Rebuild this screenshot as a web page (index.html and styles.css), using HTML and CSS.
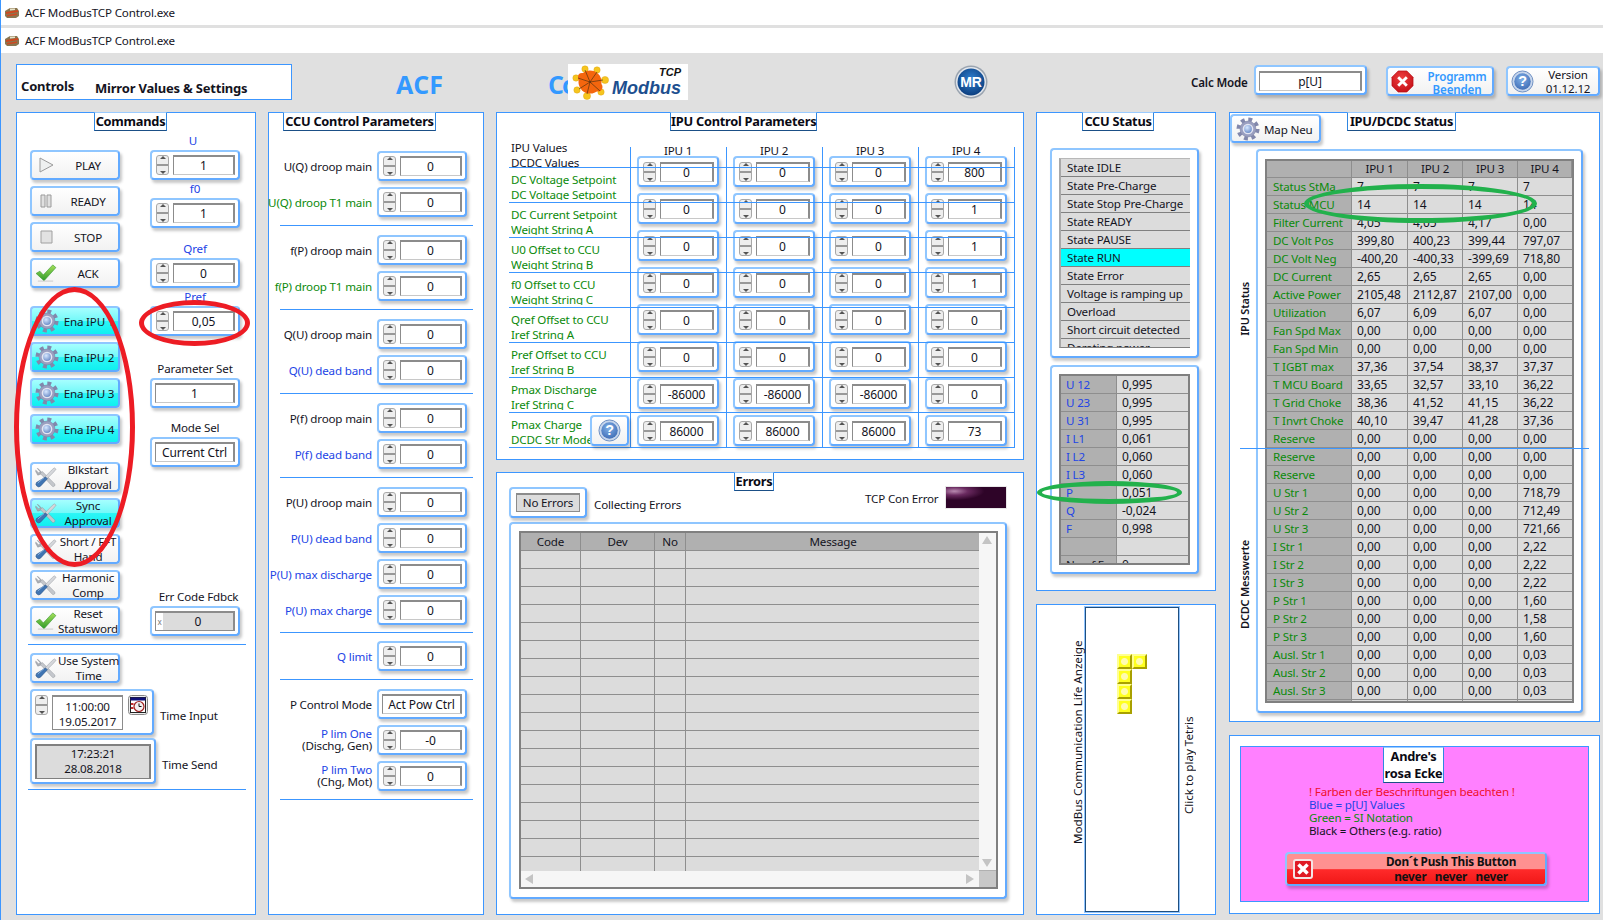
FILE: index.html
```html
<!DOCTYPE html>
<html lang="de">
<head>
<meta charset="utf-8">
<title>ACF ModBusTCP Control.exe</title>
<link rel="stylesheet" href="styles.css">
</head>
<body>
<svg class="defs" width="0" height="0" aria-hidden="true">
  <defs>
    <radialGradient id="gCore" cx=".4" cy=".35" r=".7"><stop offset="0" stop-color="#d8e8ff"/><stop offset="1" stop-color="#5b7fc0"/></radialGradient>
    <linearGradient id="gCheck" x1="0" y1="0" x2="0" y2="1"><stop offset="0" stop-color="#a6e05a"/><stop offset="1" stop-color="#2f9a2a"/></linearGradient>
    <radialGradient id="gBlue" cx=".45" cy=".35" r=".75"><stop offset="0" stop-color="#7fb0e8"/><stop offset="1" stop-color="#3a66b0"/></radialGradient>
    <radialGradient id="gRed" cx=".45" cy=".35" r=".75"><stop offset="0" stop-color="#f04040"/><stop offset="1" stop-color="#c00c14"/></radialGradient>
    <radialGradient id="gMr" cx=".5" cy=".4" r=".6"><stop offset="0" stop-color="#2f80d0"/><stop offset="1" stop-color="#0c3f80"/></radialGradient>
    <symbol id="gear" viewBox="0 0 26 26">
      <circle cx="13" cy="13" r="10.4" fill="none" stroke="#8288ac" stroke-width="4.2" stroke-dasharray="4.2 3.97"/>
      <circle cx="13" cy="13" r="8.6" fill="#9a9fc0"/>
      <circle cx="13" cy="13" r="8.6" fill="none" stroke="#777c9f" stroke-width=".6"/>
      <circle cx="13" cy="13" r="5" fill="url(#gCore)" stroke="#e4e6f2" stroke-width="1.6"/>
    </symbol>
    <symbol id="tools" viewBox="0 0 24 24">
      <path d="M3 2.5 7 6.5 6 9 3 10 .8 6 .8 4.5 4 7.5 5.5 6 2.6 2.8Z" fill="#aeb2b8" stroke="#7f848c" stroke-width=".5"/>
      <path d="M5.8 8.2 8 6 21.5 19.5A1.9 1.9 0 0 1 19 22.2Z" fill="#c4c7cc" stroke="#8a8e95" stroke-width=".5"/>
      <path d="M21 2 23 3.5 20.5 6.5 12 15 9.8 13 18 4.6Z" fill="#d5d7db" stroke="#8f939a" stroke-width=".5"/>
      <path d="M11.6 12 13.5 14 6 22A3 3 0 0 1 1.6 18Z" fill="#3f74b2" stroke="#244f85" stroke-width=".6"/>
      <path d="M3 18.6 9.8 12.8" stroke="#8fb6e0" stroke-width="1"/>
    </symbol>
    <symbol id="check" viewBox="0 0 24 20">
      <path d="M1 10.5 5.2 8 9 12.2 19.5 1 23 4 9.8 18.6Z" fill="url(#gCheck)" stroke="#3a9a30" stroke-width=".7"/>
      <path d="M3 19 20 19" stroke="#c6c6c6" stroke-width="1"/>
    </symbol>
    <symbol id="help" viewBox="0 0 24 24">
      <circle cx="12" cy="12" r="11" fill="#c7d6ec" stroke="#6a8cc0"/>
      <circle cx="12" cy="12" r="8.6" fill="url(#gBlue)"/>
      <text x="12" y="17" text-anchor="middle" class="help-q">?</text>
    </symbol>
    <symbol id="stopx" viewBox="0 0 24 24">
      <path d="M7.5 1 16.5 1 23 7.5 23 16.5 16.5 23 7.5 23 1 16.5 1 7.5Z" fill="url(#gRed)" stroke="#b80a12" stroke-width=".7"/>
      <path d="M7.5 7.5 16.5 16.5M16.5 7.5 7.5 16.5" stroke="#fff" stroke-width="3"/>
    </symbol>
  </defs>
</svg>

<div class="app">
  <div class="title">
    <svg class="appicon" viewBox="0 0 16 12"><path d="M1 4 6 1 13 1 15 4 15 9 12 11 3 11 1 9Z" fill="#8a7650"/><path d="M2 5 14 3 14 5 2 7ZM3 8 13 6.500 13 8 3 9.500Z" fill="#d04820"/><path d="M6 1.500 11 1.500 11 3 6 3.500Z" fill="#e8e2c8"/></svg>
    <span>ACF ModBusTCP Control.exe</span>
  </div>
  <div class="title title-2">
    <svg class="appicon" viewBox="0 0 16 12"><path d="M1 4 6 1 13 1 15 4 15 9 12 11 3 11 1 9Z" fill="#8a7650"/><path d="M2 5 14 3 14 5 2 7ZM3 8 13 6.500 13 8 3 9.500Z" fill="#d04820"/><path d="M6 1.500 11 1.500 11 3 6 3.500Z" fill="#e8e2c8"/></svg>
    <span>ACF ModBusTCP Control.exe</span>
  </div>

  <div class="work">
    <header class="head">
      <div class="hd-box"><span class="hd-controls">Controls</span><span class="hd-mirror">Mirror Values &amp; Settings</span></div>
      <div class="hd-acf">ACF</div>
      <div class="hd-c">Co</div>
      <div class="logo">
        <svg class="logo-mark" viewBox="0 0 40 36">
          <g fill="#f6c51e" stroke="#d8a010" stroke-width=".4">
            <circle cx="13" cy="5" r="3.200"/><circle cx="25" cy="6" r="3.200"/><circle cx="33" cy="16" r="3.600"/><circle cx="29" cy="28" r="3.200"/>
            <circle cx="15" cy="32" r="3.600"/><circle cx="5" cy="26" r="3.200"/><circle cx="4" cy="14" r="3.200"/>
          </g>
          <circle cx="18" cy="18" r="11.500" fill="#f4660e"/>
          <circle cx="10" cy="13" r="4" fill="#f4660e"/><circle cx="26" cy="23" r="4.500" fill="#f4660e"/>
          <path d="M18 18 13 6M18 18 25 8M18 18 31 16M18 18 28 27M18 18 15 30M18 18 7 25M18 18 6 14" stroke="#3a2a10" stroke-width=".6"/>
        </svg>
        <div class="logo-words"><span class="logo-tcp">TCP</span><span class="logo-mb">Modbus</span></div>
      </div>
      <svg class="mr" viewBox="0 0 34 34">
        <circle cx="17" cy="17" r="16.500" fill="#9aa4b0"/>
        <circle cx="17" cy="17" r="15" fill="#e4e8ee"/>
        <circle cx="17" cy="17" r="13.500" fill="url(#gMr)"/>
        <text x="17" y="22" text-anchor="middle" class="mr-text">MR</text>
      </svg>
      <div class="hd-calc">Calc Mode</div>
      <div class="frame hd-calcbox"><span class="val">p[U]</span></div>
      <div class="frame btn hd-prog"><svg class="ic-23"><use href="#stopx"/></svg><span class="hd-progtext">Programm<br>Beenden</span></div>
      <div class="frame btn hd-ver"><svg class="ic-23"><use href="#help"/></svg><span class="hd-vertext">Version<br>01.12.12</span></div>
    </header>

    <div class="panels">
      <!-- Commands -->
      <section class="panel p-cmd">
        <h2 class="legend lg-cmd">Commands</h2>
        <div class="cmd-top">
          <div class="cmd-left">
            <div class="frame btn"><svg class="ic-slot" viewBox="0 0 22 18"><path d="M5 2 18 9 5 16Z" fill="#eef0f0" stroke="#9a9a9a"/></svg><span class="btxt">PLAY</span></div>
            <div class="frame btn"><svg class="ic-slot" viewBox="0 0 22 18"><path d="M6 3H10V15H6ZM12 3H16V15H12Z" fill="#e0e0e0" stroke="#9a9a9a"/></svg><span class="btxt">READY</span></div>
            <div class="frame btn"><svg class="ic-slot" viewBox="0 0 22 18"><path d="M6 3H17V15H6Z" fill="#e2e2e2" stroke="#a0a0a0"/></svg><span class="btxt">STOP</span></div>
            <div class="frame btn"><svg class="ic-slot" viewBox="0 0 24 20"><use href="#check"/></svg><span class="btxt">ACK</span></div>
            <div class="frame btn cyan gap18"><svg class="ic-gear"><use href="#gear"/></svg><span class="btxt">Ena IPU 1</span></div>
            <div class="frame btn cyan"><svg class="ic-gear"><use href="#gear"/></svg><span class="btxt">Ena IPU 2</span></div>
            <div class="frame btn cyan"><svg class="ic-gear"><use href="#gear"/></svg><span class="btxt">Ena IPU 3</span></div>
            <div class="frame btn cyan"><svg class="ic-gear"><use href="#gear"/></svg><span class="btxt">Ena IPU 4</span></div>
            <div class="frame btn gap18"><svg class="ic-tool"><use href="#tools"/></svg><span class="btxt">Blkstart<br>Approval</span></div>
            <div class="frame btn cyan"><svg class="ic-tool"><use href="#tools"/></svg><span class="btxt">Sync<br>Approval</span></div>
            <div class="frame btn"><svg class="ic-tool"><use href="#tools"/></svg><span class="btxt">Short / FFT<br>Hand</span></div>
            <div class="frame btn"><svg class="ic-tool"><use href="#tools"/></svg><span class="btxt">Harmonic<br>Comp</span></div>
            <div class="frame btn"><svg class="ic-slot" viewBox="0 0 24 20"><use href="#check"/></svg><span class="btxt">Reset<br>Statusword</span></div>
          </div>
          <div class="cmd-right">
            <div class="cap blue cap-u">U</div>
            <div class="frame num"><i class="sp"></i><span class="val">1</span></div>
            <div class="cap blue">f0</div>
            <div class="frame num"><i class="sp"></i><span class="val">1</span></div>
            <div class="cap blue gap12">Qref</div>
            <div class="frame num"><i class="sp"></i><span class="val">0</span></div>
            <div class="cap blue">Pref</div>
            <div class="frame num"><i class="sp"></i><span class="val">0,05</span></div>
            <div class="cap gap24">Parameter Set</div>
            <div class="frame plain"><span class="val">1</span></div>
            <div class="cap gap11">Mode Sel</div>
            <div class="frame plain"><span class="val">Current Ctrl</span></div>
            <div class="cap cap-err gap121">Err Code Fdbck</div>
            <div class="frame plain"><span class="val val-gray"><i class="xbox">x</i>0</span></div>
          </div>
        </div>
        <div class="cmd-rule"></div>
        <div class="frame btn cmd-sys"><svg class="ic-tool"><use href="#tools"/></svg><span class="btxt">Use System<br>Time</span></div>
        <div class="time-row tr-input">
          <div class="frame time-in">
            <i class="sp"></i>
            <span class="time-val">11:00:00<br>19.05.2017</span>
            <svg class="time-ic" viewBox="0 0 20 20"><rect x=".5" y=".5" width="19" height="19" rx="3" fill="#eee" stroke="#888"/><rect x="2.500" y="2.500" width="15" height="15" fill="#fff" stroke="#222"/><rect x="2.500" y="2.500" width="15" height="3" fill="#10107a"/><circle cx="11" cy="11.500" r="5" fill="#f4f0f0" stroke="#a02020" stroke-width="1.200"/><path d="M11 8.500V11.500H13.500" stroke="#111" fill="none"/><path d="M3 8H5.500V10H3ZM3 12H5.500V14H3Z" fill="#c03030"/></svg>
          </div>
          <span class="time-lab">Time Input</span>
        </div>
        <div class="time-row tr-send">
          <div class="frame time-out"><span class="time-gray">17:23:21<br>28.08.2018</span></div>
          <span class="time-lab">Time Send</span>
        </div>
        <div class="cmd-rule rule-end"></div>
      </section>

      <!-- CCU control -->
      <section class="panel p-ccu">
        <h2 class="legend lg-ccu">CCU Control Parameters</h2>
        <div class="grp g-first">
          <div class="row"><span class="rl">U(Q) droop main</span><div class="frame num"><i class="sp"></i><span class="val">0</span></div></div>
          <div class="row"><span class="rl green">U(Q) droop T1 main</span><div class="frame num"><i class="sp"></i><span class="val">0</span></div></div>
        </div>
        <div class="grp">
          <div class="row"><span class="rl">f(P) droop main</span><div class="frame num"><i class="sp"></i><span class="val">0</span></div></div>
          <div class="row"><span class="rl green">f(P) droop T1 main</span><div class="frame num"><i class="sp"></i><span class="val">0</span></div></div>
        </div>
        <div class="grp">
          <div class="row"><span class="rl">Q(U) droop main</span><div class="frame num"><i class="sp"></i><span class="val">0</span></div></div>
          <div class="row"><span class="rl blue">Q(U) dead band</span><div class="frame num"><i class="sp"></i><span class="val">0</span></div></div>
        </div>
        <div class="grp">
          <div class="row"><span class="rl">P(f) droop main</span><div class="frame num"><i class="sp"></i><span class="val">0</span></div></div>
          <div class="row"><span class="rl blue">P(f) dead band</span><div class="frame num"><i class="sp"></i><span class="val">0</span></div></div>
        </div>
        <div class="grp g-5">
          <div class="row"><span class="rl">P(U) droop main</span><div class="frame num"><i class="sp"></i><span class="val">0</span></div></div>
          <div class="row"><span class="rl blue">P(U) dead band</span><div class="frame num"><i class="sp"></i><span class="val">0</span></div></div>
          <div class="row"><span class="rl blue">P(U) max discharge</span><div class="frame num"><i class="sp"></i><span class="val">0</span></div></div>
          <div class="row"><span class="rl blue">P(U) max charge</span><div class="frame num"><i class="sp"></i><span class="val">0</span></div></div>
        </div>
        <div class="grp g-6">
          <div class="row"><span class="rl blue">Q limit</span><div class="frame num"><i class="sp"></i><span class="val">0</span></div></div>
        </div>
        <div class="grp g-last">
          <div class="row"><span class="rl">P Control Mode</span><div class="frame plain"><span class="val">Act Pow Ctrl</span></div></div>
          <div class="row"><span class="rl rl-2"><span class="blue">P lim One</span><br>(Dischg, Gen)</span><div class="frame num"><i class="sp"></i><span class="val">-0</span></div></div>
          <div class="row"><span class="rl rl-2"><span class="blue">P lim Two</span><br>(Chg, Mot)</span><div class="frame num"><i class="sp"></i><span class="val">0</span></div></div>
        </div>
      </section>

      <!-- IPU control + errors -->
      <div class="col col-mid">
        <section class="panel p-ipuc">
          <h2 class="legend lg-ipuc">IPU Control Parameters</h2>
          <div class="ipu-body">
            <div class="ipu-labels">
              <div class="il il-first">IPU Values<br>DCDC Values</div>
              <div class="il green">DC Voltage Setpoint<br>DC Voltage Setpoint</div>
              <div class="il green">DC Current Setpoint<br>Weight String A</div>
              <div class="il green">U0 Offset to CCU<br>Weight String B</div>
              <div class="il green">f0 Offset to CCU<br>Weight String C</div>
              <div class="il green">Qref Offset to CCU<br>Iref String A</div>
              <div class="il green">Pref Offset to CCU<br>Iref String B</div>
              <div class="il green">Pmax Discharge<br>Iref String C</div>
              <div class="il green">Pmax Charge<br>DCDC Str Mode</div>
            </div>
            <div class="ipu-grid">
              <div class="ih">IPU 1</div><div class="ih">IPU 2</div><div class="ih">IPU 3</div><div class="ih">IPU 4</div>
              <div class="frame num"><i class="sp"></i><span class="val">0</span></div><div class="frame num"><i class="sp"></i><span class="val">0</span></div><div class="frame num"><i class="sp"></i><span class="val">0</span></div><div class="frame num"><i class="sp"></i><span class="val">800</span></div>
              <div class="frame num"><i class="sp"></i><span class="val">0</span></div><div class="frame num"><i class="sp"></i><span class="val">0</span></div><div class="frame num"><i class="sp"></i><span class="val">0</span></div><div class="frame num"><i class="sp"></i><span class="val">1</span></div>
              <div class="frame num"><i class="sp"></i><span class="val">0</span></div><div class="frame num"><i class="sp"></i><span class="val">0</span></div><div class="frame num"><i class="sp"></i><span class="val">0</span></div><div class="frame num"><i class="sp"></i><span class="val">1</span></div>
              <div class="frame num"><i class="sp"></i><span class="val">0</span></div><div class="frame num"><i class="sp"></i><span class="val">0</span></div><div class="frame num"><i class="sp"></i><span class="val">0</span></div><div class="frame num"><i class="sp"></i><span class="val">1</span></div>
              <div class="frame num"><i class="sp"></i><span class="val">0</span></div><div class="frame num"><i class="sp"></i><span class="val">0</span></div><div class="frame num"><i class="sp"></i><span class="val">0</span></div><div class="frame num"><i class="sp"></i><span class="val">0</span></div>
              <div class="frame num"><i class="sp"></i><span class="val">0</span></div><div class="frame num"><i class="sp"></i><span class="val">0</span></div><div class="frame num"><i class="sp"></i><span class="val">0</span></div><div class="frame num"><i class="sp"></i><span class="val">0</span></div>
              <div class="frame num"><i class="sp"></i><span class="val">-86000</span></div><div class="frame num"><i class="sp"></i><span class="val">-86000</span></div><div class="frame num"><i class="sp"></i><span class="val">-86000</span></div><div class="frame num"><i class="sp"></i><span class="val">0</span></div>
              <div class="frame num"><i class="sp"></i><span class="val">86000</span></div><div class="frame num"><i class="sp"></i><span class="val">86000</span></div><div class="frame num"><i class="sp"></i><span class="val">86000</span></div><div class="frame num"><i class="sp"></i><span class="val">73</span></div>
            </div>
            <div class="ipu-hlines"></div>
            <div class="ipu-vlines"></div>
            <div class="frame btn help-btn"><svg class="ic-23"><use href="#help"/></svg></div>
          </div>
        </section>
        <section class="panel p-err">
          <h2 class="legend lg-err">Errors</h2>
          <div class="err-top">
            <div class="frame err-btn"><span class="err-no">No Errors</span></div>
            <span class="err-coll">Collecting Errors</span>
            <span class="err-tcp">TCP Con Error</span>
            <div class="led"></div>
          </div>
          <div class="frame err-frame">
            <div class="err-table">
              <div class="err-cells">
                <table class="grid grid-err">
                  <tr><th>Code</th><th>Dev</th><th>No</th><th>Message</th></tr>
                  <tr><td></td><td></td><td></td><td></td></tr><tr><td></td><td></td><td></td><td></td></tr><tr><td></td><td></td><td></td><td></td></tr>
                  <tr><td></td><td></td><td></td><td></td></tr><tr><td></td><td></td><td></td><td></td></tr><tr><td></td><td></td><td></td><td></td></tr>
                  <tr><td></td><td></td><td></td><td></td></tr><tr><td></td><td></td><td></td><td></td></tr><tr><td></td><td></td><td></td><td></td></tr>
                  <tr><td></td><td></td><td></td><td></td></tr><tr><td></td><td></td><td></td><td></td></tr><tr><td></td><td></td><td></td><td></td></tr>
                  <tr><td></td><td></td><td></td><td></td></tr><tr><td></td><td></td><td></td><td></td></tr><tr><td></td><td></td><td></td><td></td></tr>
                  <tr><td></td><td></td><td></td><td></td></tr><tr><td></td><td></td><td></td><td></td></tr><tr><td></td><td></td><td></td><td></td></tr>
                </table>
              </div>
              <div class="vscroll"><i class="tri tri-up"></i><i class="tri tri-down"></i></div>
              <div class="hscroll"><i class="tri tri-left"></i><i class="tri tri-right"></i></div>
              <div class="corner"></div>
            </div>
          </div>
        </section>
      </div>

      <!-- CCU status + tetris -->
      <div class="col col-stat">
        <section class="panel p-stat">
          <h2 class="legend lg-stat">CCU Status</h2>
          <div class="frame stat-frame1">
            <ul class="states">
              <li>State IDLE</li><li>State Pre-Charge</li><li>State Stop Pre-Charge</li><li>State READY</li><li>State PAUSE</li>
              <li class="on">State RUN</li><li>State Error</li><li>Voltage is ramping up</li><li>Overload</li><li>Short circuit detected</li><li>Derating power</li>
            </ul>
          </div>
          <div class="frame stat-frame2">
            <div class="clip stat-table">
              <table class="grid grid-stat">
                <tr><th class="blue">U 12</th><td>0,995</td></tr>
                <tr><th class="blue">U 23</th><td>0,995</td></tr>
                <tr><th class="blue">U 31</th><td>0,995</td></tr>
                <tr><th class="blue">I L1</th><td>0,061</td></tr>
                <tr><th class="blue">I L2</th><td>0,060</td></tr>
                <tr><th class="blue">I L3</th><td>0,060</td></tr>
                <tr><th class="blue">P</th><td>0,051</td></tr>
                <tr><th class="blue">Q</th><td>-0,024</td></tr>
                <tr><th class="blue">F</th><td>0,998</td></tr>
                <tr><th></th><td></td></tr>
                <tr><th>No of Err</th><td>0</td></tr>
              </table>
            </div>
          </div>
        </section>
        <section class="panel p-life">
          <span class="vtext life-a">ModBus Communication Life Anzeige</span>
          <div class="tetris">
            <div class="blocks"><i></i><i></i><i></i><b></b><i></i><b></b><i></i><b></b></div>
          </div>
          <span class="vtext life-b">Click to play Tetris</span>
        </section>
      </div>

      <!-- IPU status + pink -->
      <div class="col col-right">
        <section class="panel p-ipus">
          <div class="ipus-top">
            <div class="frame btn map-btn"><svg class="ic-gear"><use href="#gear"/></svg><span class="map-txt">Map Neu</span></div>
            <h2 class="legend lg-ipus">IPU/DCDC Status</h2>
          </div>
          <div class="ipus-main">
            <div class="vcol"><span class="vtext vb v1">IPU Status</span><span class="vtext vb v2">DCDC Messwerte</span></div>
            <div class="frame ipus-frame">
              <div class="clip ipus-table">
                <table class="grid grid-ipu">
                  <tr><th></th><th class="hc">IPU 1</th><th class="hc">IPU 2</th><th class="hc">IPU 3</th><th class="hc">IPU 4</th></tr>
                  <tr><th>Status StMa</th><td>7</td><td>7</td><td>7</td><td>7</td></tr>
                  <tr><th>Status MCU</th><td>14</td><td>14</td><td>14</td><td>14</td></tr>
                  <tr><th>Filter Current</th><td>4,05</td><td>4,05</td><td>4,17</td><td>0,00</td></tr>
                  <tr><th>DC Volt Pos</th><td>399,80</td><td>400,23</td><td>399,44</td><td>797,07</td></tr>
                  <tr><th>DC Volt Neg</th><td>-400,20</td><td>-400,33</td><td>-399,69</td><td>718,80</td></tr>
                  <tr><th>DC Current</th><td>2,65</td><td>2,65</td><td>2,65</td><td>0,00</td></tr>
                  <tr><th>Active Power</th><td>2105,48</td><td>2112,87</td><td>2107,00</td><td>0,00</td></tr>
                  <tr><th>Utilization</th><td>6,07</td><td>6,09</td><td>6,07</td><td>0,00</td></tr>
                  <tr><th>Fan Spd Max</th><td>0,00</td><td>0,00</td><td>0,00</td><td>0,00</td></tr>
                  <tr><th>Fan Spd Min</th><td>0,00</td><td>0,00</td><td>0,00</td><td>0,00</td></tr>
                  <tr><th>T IGBT max</th><td>37,36</td><td>37,54</td><td>38,37</td><td>37,37</td></tr>
                  <tr><th>T MCU Board</th><td>33,65</td><td>32,57</td><td>33,10</td><td>36,22</td></tr>
                  <tr><th>T Grid Choke</th><td>38,36</td><td>41,52</td><td>41,15</td><td>36,22</td></tr>
                  <tr><th>T Invrt Choke</th><td>40,10</td><td>39,47</td><td>41,28</td><td>37,36</td></tr>
                  <tr><th>Reserve</th><td>0,00</td><td>0,00</td><td>0,00</td><td>0,00</td></tr>
                  <tr><th>Reserve</th><td>0,00</td><td>0,00</td><td>0,00</td><td>0,00</td></tr>
                  <tr><th>Reserve</th><td>0,00</td><td>0,00</td><td>0,00</td><td>0,00</td></tr>
                  <tr><th>U Str 1</th><td>0,00</td><td>0,00</td><td>0,00</td><td>718,79</td></tr>
                  <tr><th>U Str 2</th><td>0,00</td><td>0,00</td><td>0,00</td><td>712,49</td></tr>
                  <tr><th>U Str 3</th><td>0,00</td><td>0,00</td><td>0,00</td><td>721,66</td></tr>
                  <tr><th>I Str 1</th><td>0,00</td><td>0,00</td><td>0,00</td><td>2,22</td></tr>
                  <tr><th>I Str 2</th><td>0,00</td><td>0,00</td><td>0,00</td><td>2,22</td></tr>
                  <tr><th>I Str 3</th><td>0,00</td><td>0,00</td><td>0,00</td><td>2,22</td></tr>
                  <tr><th>P Str 1</th><td>0,00</td><td>0,00</td><td>0,00</td><td>1,60</td></tr>
                  <tr><th>P Str 2</th><td>0,00</td><td>0,00</td><td>0,00</td><td>1,58</td></tr>
                  <tr><th>P Str 3</th><td>0,00</td><td>0,00</td><td>0,00</td><td>1,60</td></tr>
                  <tr><th>Ausl. Str 1</th><td>0,00</td><td>0,00</td><td>0,00</td><td>0,03</td></tr>
                  <tr><th>Ausl. Str 2</th><td>0,00</td><td>0,00</td><td>0,00</td><td>0,03</td></tr>
                  <tr><th>Ausl. Str 3</th><td>0,00</td><td>0,00</td><td>0,00</td><td>0,03</td></tr>
                  <tr><th></th><td></td><td></td><td></td><td></td></tr>
                </table>
              </div>
            </div>
            <div class="ipus-line"></div>
          </div>
        </section>
        <section class="panel p-pink">
          <div class="pink">
            <h2 class="legend lg-pink">Andre's<br>rosa Ecke</h2>
            <div class="notes">
              <div class="n-red">! Farben der Beschriftungen beachten !</div>
              <div class="blue">Blue = p[U] Values</div>
              <div class="green">Green = SI Notation</div>
              <div>Black = Others (e.g. ratio)</div>
            </div>
            <div class="frame dont">
              <span class="dont-ic"><svg viewBox="0 0 14 14"><path d="M3 3 11 11M11 3 3 11" stroke="#fff" stroke-width="3"/></svg></span>
              <span class="dont-txt">Don´t Push This Button<br><span class="dont-2">never &nbsp; never &nbsp; never</span></span>
            </div>
          </div>
        </section>
      </div>
    </div>
  </div>

  <div class="mark mark-red1"></div>
  <div class="mark mark-red2"></div>
  <div class="mark mark-green1"></div>
  <div class="mark mark-green2"></div>
</div>
</body>
</html>
```
FILE: styles.css
```css
* { box-sizing: border-box; }
html, body { margin: 0; padding: 0; background: #e0e0e0; }
body { width: 1603px; height: 920px; overflow: hidden; font-family: "Noto Sans", "Open Sans", sans-serif; font-size: 11.6px; letter-spacing: -.17px; line-height: 15px; color: #14141e; }
.defs { position: absolute; }
.app { position: relative; width: 1603px; height: 920px; border-left: 1px solid #3c96ff; background: #e0e0e0; }

.title { height: 25px; background: #fff; display: flex; align-items: center; padding-left: 3px; gap: 5px; }
.title-2 { margin-top: 3px; }
.appicon { width: 16px; height: 12px; flex: none; }

.work { padding-left: 15px; }
.head { display: flex; align-items: flex-start; height: 59px; }
.hd-box { width: 276px; height: 36px; margin-top: 11px; background: #fff; border: 1px solid #3c96ff; font-weight: 700; font-size: 13px; letter-spacing: -.2px; position: relative; display: flex; }
.hd-controls { margin: 14px 0 0 4px; width: 74px; }
.hd-mirror { margin: 16px 0 0 0; }
.hd-acf { width: 47px; margin: 15px 0 0 104px; font: 700 25px/32px "Open Sans", sans-serif; letter-spacing: 0; color: #3399ff; }
.hd-c { width: 20px; margin: 15px 0 0 105px; font: 700 25px/32px "Open Sans", sans-serif; letter-spacing: -2px; color: #3399ff; overflow: hidden; white-space: nowrap; }
.logo { width: 120px; height: 36px; margin-top: 11px; background: #fff; display: flex; }
.logo-mark { width: 40px; height: 36px; margin-left: 4px; flex: none; }
.logo-words { flex: 1; display: flex; flex-direction: column; align-items: flex-end; padding: 3px 8px 0 0; font-family: "Liberation Sans", sans-serif; font-style: italic; font-weight: 700; letter-spacing: 0; }
.logo-tcp { font-size: 11px; line-height: 11px; color: #111; }
.logo-mb { font-size: 18px; line-height: 20px; color: #1d4f8f; }
.mr { width: 34px; height: 34px; margin: 12px 0 0 266px; flex: none; }
.mr-text { font: 700 14px "Liberation Sans", sans-serif; fill: #fff; }
.hd-calc { width: 58px; margin: 22px 0 0 203px; font-weight: 600; white-space: nowrap; }
.hd-calcbox { width: 113px; height: 30px; margin: 12px 0 0 5px; padding: 4px 3px; display: flex; }
.hd-prog { width: 108px; height: 34px; margin: 13px 0 0 19px; line-height: 13px; }
.hd-progtext { flex: 1; text-align: center; color: #3399ff; font-weight: 600; margin-left: 8px; padding-top: 3px; }
.hd-ver { width: 94px; height: 34px; margin: 13px 0 0 12px; line-height: 14px; }
.hd-vertext { flex: 1; text-align: center; margin-left: 4px; padding-top: 2px; }
.ic-23 { width: 23px; height: 23px; flex: none; }

.panels { display: flex; gap: 12px; align-items: stretch; height: 803px; }
.panel { background: #fff; border: 1px solid #3c96ff; position: relative; }
.col { display: flex; flex-direction: column; gap: 13px; }
.p-cmd { width: 240px; }
.p-ccu { width: 216px; }
.col-mid { width: 528px; gap: 12px; }
.col-stat { width: 180px; }
.col-right { width: 371px; margin-left: 1px; }

.legend { margin: -1px 0 1px; height: 19px; font-size: 12.8px; letter-spacing: -.25px; line-height: 17px; font-weight: 700; text-align: center; white-space: nowrap; background: #fff; border: 1px solid #2f86e0; border-top-color: #9cccff; border-bottom-color: #1b4f86; color: #0a0a14; }
.lg-cmd { width: 73px; margin-left: 77px; }
.lg-ccu { width: 153px; margin-left: 14px; }
.lg-ipuc { width: 147px; margin-left: 173px; }
.lg-err { width: 40px; margin-left: 237px; }
.lg-stat { width: 72px; margin-left: 45px; }
.lg-ipus { width: 109px; margin-left: 26px; }
.lg-pink { width: 61px; height: 36px; margin: 0 0 2px 142px; }

.frame { background: #fff; border: 2px solid #62aaff; border-top-color: #8fc6ff; border-left-color: #8fc6ff; border-radius: 4px; box-shadow: 2px 3px 3px rgba(0, 0, 0, .22); }
.btn { display: flex; align-items: center; background: linear-gradient(#fff, #f2f2f2); padding-left: 3px; height: 30px; white-space: nowrap; }
.cyan { background: linear-gradient(#a6ffff 0, #72f8f8 50%, #2cf6f6 52%, #10f0f0 100%); }
.btxt { flex: 1; text-align: center; margin-left: 1px; }
.ic-slot { width: 22px; height: 18px; flex: none; }
.ic-gear { width: 24px; height: 24px; flex: none; margin-left: 0; }
.ic-tool { width: 22px; height: 22px; flex: none; }

.num { display: flex; align-items: center; height: 30px; padding: 0 3px 0 4px; gap: 4px; }
.plain { display: flex; align-items: center; height: 30px; padding: 0 3px; }
.sp { display: block; flex: none; width: 13px; height: 20px; position: relative; border: 1px solid #a8a8a8; border-radius: 3px; background: linear-gradient(#eee 0 46%, #999 46% 54%, #eee 54%); }
.sp::before, .sp::after { content: ""; position: absolute; left: 3px; border: 3px solid transparent; }
.sp::before { top: 0; border-top: 0; border-bottom-color: #555; }
.sp::after { bottom: 0; border-bottom: 0; border-top-color: #555; }
.val { flex: 1; height: 20px; min-width: 0; font-size: 12px; letter-spacing: -.1px; line-height: 17px; text-align: center; background: #fff; border: 1px solid #8c8c8c; border-top-width: 2px; border-right-width: 2px; border-bottom-color: #c8c8c8; white-space: nowrap; }
.val-gray { background: #dcdcdc; position: relative; border-color: #8c8c8c; padding-left: 7px; }
.xbox { position: absolute; left: 0; top: 0; bottom: 0; width: 7px; background: #fff; font-size: 8px; font-style: normal; color: #777; }

.blue { color: #2244e6; }
.green { color: #0b8a0b; }

.cmd-top { display: flex; }
.cmd-left { width: 90px; margin: 18px 0 0 13px; display: flex; flex-direction: column; gap: 6px; }
.gap18 { margin-top: 12px; }
.cmd-right { width: 90px; margin-left: 30px; display: flex; flex-direction: column; }
.cap { height: 16px; margin-bottom: 2px; text-align: center; white-space: nowrap; line-height: 18px; }
.cap-u { padding-right: 4px; }
.cap-err { padding-left: 7px; }
.gap12 { margin-top: 12px; }
.gap24 { margin-top: 24px; }
.gap11 { margin-top: 11px; }
.gap121 { margin-top: 121px; }
.cmd-rule { height: 1px; background: #3c96ff; margin: 8px 9px 0 11px; }
.cmd-sys { width: 90px; margin: 8px 0 0 13px; }
.time-row { display: flex; align-items: center; margin: 6px 0 0 13px; }
.tr-send { margin-top: 3px; }
.time-in { width: 124px; height: 46px; display: flex; align-items: flex-start; padding: 4px 3px; gap: 4px; }
.time-val { width: 71px; height: 35px; text-align: center; line-height: 15px; padding-top: 2px; border: 1px solid #8c8c8c; border-top-width: 2px; background: #fff; }
.time-ic { width: 20px; height: 20px; flex: none; margin: 0 0 0 1px; }
.time-lab { margin: 7px 0 0 6px; }
.tr-send .time-lab { margin-top: 6px; }
.time-out { width: 126px; height: 46px; padding: 4px 3px; }
.time-gray { display: block; height: 35px; text-align: center; background: #dcdcdc; border: 2px solid #808080; border-bottom-width: 1px; padding-top: 0; }
.rule-end { margin-top: 5px; }

.grp { margin: 0 10px 0 11px; padding: 9px 6px 8px 0; border-bottom: 1px solid #3c96ff; display: flex; flex-direction: column; gap: 6px; }
.g-first { padding-top: 19px; }
.g-5 { padding-bottom: 7px; }
.g-6 { padding-top: 8px; }
.row { display: flex; justify-content: flex-end; align-items: center; height: 30px; }
.row > .frame { width: 90px; flex: none; }
.rl { flex: none; margin-right: 5px; text-align: right; white-space: nowrap; padding-top: 1px; }
.rl-2 { line-height: 12.500px; padding-top: 0; }

.p-ipuc { height: 348px; }
.p-err { height: 443px; }
.ipu-body { display: flex; position: relative; margin: 8px 0 0 12px; }
.ipu-labels { width: 128px; display: flex; flex-direction: column; gap: 7px; }
.il { height: 28px; overflow: hidden; white-space: nowrap; margin-left: 2px; }
.il-first { margin: 1px 0 -3px 2px; }
.ipu-grid { display: grid; grid-template-columns: repeat(4, 82px); grid-template-rows: 11px repeat(8, 31px); column-gap: 14px; row-gap: 6px; }
.ipu-grid .num { height: 31px; }
.ih { text-align: center; padding-top: 4px; line-height: 15px; height: 11px; }
.ipu-hlines { position: absolute; left: 0; top: 28px; width: 505px; height: 281px; background: repeating-linear-gradient(to bottom, #3c96ff 0 1px, transparent 1px 35px); }
.ipu-vlines { position: absolute; left: 121px; top: 8px; width: 385px; height: 301px; background: repeating-linear-gradient(to right, #3c96ff 0 1px, transparent 1px 96px); }
.help-btn { position: absolute; left: 81px; top: 276px; width: 39px; height: 31px; justify-content: center; padding: 0; }

.err-top { display: flex; align-items: flex-start; margin: -5px 0 0 12px; height: 35px; }
.err-btn { width: 78px; height: 31px; padding: 4px 5px; }
.err-no { display: block; height: 19px; text-align: center; line-height: 16px; background: #dcdcdc; border: 1px solid #8c8c8c; border-top-width: 2px; }
.err-coll { margin: 10px 0 0 7px; width: 271px; }
.err-tcp { margin: 4px 0 0 0; width: 81px; white-space: nowrap; }
.led { width: 60px; height: 21px; background: radial-gradient(ellipse 30px 9px at 14% 20%, #b88ab0 0, #6a2a60 45%, transparent 100%), #2e0428; box-shadow: 0 0 0 1px #e8e8e8; }
.err-frame { width: 498px; height: 377px; margin-left: 12px; padding: 7px 8px; }
.err-table { width: 479px; height: 358px; border: 2px solid #808080; display: grid; grid-template-columns: 1fr 17px; grid-template-rows: 1fr 16px; background: #f6f6f6; }
.err-cells { overflow: hidden; }
.vscroll, .hscroll { position: relative; background: #f6f6f6; }
.vscroll { border-bottom: 1px solid #b0b0b0; }
.corner { background: #c8c8c8; }
.tri { position: absolute; border: 5px solid transparent; }
.tri-up { top: 3px; left: 3px; border-top: 0; border-bottom: 8px solid #c4c4c4; }
.tri-down { bottom: 3px; left: 3px; border-bottom: 0; border-top: 8px solid #c4c4c4; }
.tri-left { top: 3px; left: 4px; border-left: 0; border-right: 8px solid #c4c4c4; }
.tri-right { top: 3px; right: 5px; border-right: 0; border-left: 8px solid #c4c4c4; }

.grid { border-collapse: separate; border-spacing: 0; table-layout: fixed; }
.grid th, .grid td { height: 18px; padding: 0; border-right: 1px solid #8e8e8e; border-bottom: 1px solid #8e8e8e; background: #dcdcdc; font-weight: 400; line-height: 16px; white-space: nowrap; overflow: hidden; }
.grid td { font-size: 12px; letter-spacing: -.1px; }
.grid th { background: #b0b0b0; text-align: center; }
.grid-err { width: 460px; }
.grid-err tr:first-child th:nth-child(1) { width: 60px; }
.grid-err tr:first-child th:nth-child(2) { width: 74px; }
.grid-err tr:first-child th:nth-child(3) { width: 31px; }
.clip { overflow: hidden; border: 2px solid #808080; }

.p-stat { height: 479px; }
.p-life { height: 311px; display: flex; letter-spacing: 0; }
.stat-frame1 { width: 149px; height: 210px; margin: 17px 0 0 13px; padding: 8px 7px; }
.states { list-style: none; margin: 0; padding: 0; height: 190px; overflow: hidden; border-top: 1px solid #b8b8b8; border-left: 2px solid #a8a8a8; border-bottom: 1px solid #808080; }
.states li { height: 18px; line-height: 16px; padding: 1px 0 0 6px; background: #dcdcdc; border-bottom: 1px solid #808080; white-space: nowrap; }
.states .on { background: #00ffff; }
.stat-frame2 { width: 149px; height: 209px; margin: 7px 0 0 13px; padding: 7px; }
.stat-table { width: 131px; height: 191px; }
.grid-stat { width: 127px; }
.grid-stat tr:first-child th { width: 56px; }
.grid-stat th { text-align: left; padding-left: 5px; }
.grid-stat td { padding-left: 5px; border-right: 0; }

.vtext { writing-mode: vertical-rl; transform: rotate(180deg); white-space: nowrap; }
.life-a { width: 16px; margin: 37px 0 0 33px; height: 202px; }
.tetris { width: 94px; height: 305px; margin: 2px 0 0 -1px; border: 1px solid #1f4f7f; outline: 1px solid #8fc4ff; outline-offset: 0; background: #fff; padding: 46px 0 0 31px; }
.blocks { display: grid; grid-template-columns: 15px 15px; grid-auto-rows: 15px; }
.blocks i { display: block; background: radial-gradient(circle at center, #fffbb0 0 3px, #ffff20 4px); border: 2px solid; border-color: #ffff90 #a8a000 #a8a000 #ffff90; }
.blocks b { display: block; }
.life-b { width: 16px; margin: 112px 0 0 2px; height: 97px; }

.p-ipus { height: 610px; }
.p-pink { height: 179px; padding: 10px; }
.ipus-top { display: flex; height: 36px; align-items: flex-start; }
.map-btn { width: 91px; height: 29px; margin-top: 1px; padding-left: 4px; }
.map-txt { margin-left: 4px; padding-top: 1px; }
.ipus-main { display: flex; position: relative; }
.vcol { width: 26px; display: flex; flex-direction: column; align-items: center; padding-left: 3px; }
.vb { font-weight: 600; font-size: 11px; letter-spacing: -.2px; }
.v1 { margin-top: 133px; }
.v2 { margin-top: 204px; }
.ipus-frame { width: 327px; height: 564px; padding: 8px 7px; }
.ipus-table { width: 309px; height: 544px; }
.grid-ipu { width: 305px; }
.grid-ipu tr:first-child th { height: 17px; }
.grid-ipu tr:first-child th:nth-child(1) { width: 85px; }
.grid-ipu tr:first-child th:nth-child(2) { width: 56px; }
.grid-ipu tr:first-child th:nth-child(3) { width: 55px; }
.grid-ipu tr:first-child th:nth-child(4) { width: 55px; }
.grid-ipu th { text-align: left; padding-left: 6px; color: #0b8a0b; }
.grid-ipu th.hc { text-align: center; padding: 0; color: #14141e; background: #b0b0b0; }
.grid-ipu td { padding-left: 5px; }
.grid-ipu td:last-child { border-right: 0; }
.ipus-line { position: absolute; left: 10px; top: 299px; width: 349px; height: 1px; background: #3c96ff; }

.pink { background: #ff80ff; border: 1px solid #3c96ff; height: 156px; }
.notes { margin-left: 68px; line-height: 13px; }
.n-red { color: #f0102c; }
.dont { width: 262px; height: 34px; margin: 15px 0 0 44px; display: flex; align-items: center; background: linear-gradient(#ff9090 0 50%, #ff2a2a 52%, #f01818 100%); }
.dont-ic { width: 20px; height: 20px; margin-left: 6px; flex: none; background: #e01a24; border: 2px solid #f4e4e4; border-radius: 3px; display: flex; }
.dont-txt { width: 190px; margin-left: 44px; text-align: center; font-weight: 700; font-size: 11.8px; letter-spacing: -.25px; line-height: 15px; color: #111; white-space: nowrap; }
.dont-2 { font-size: 11.8px; }

.mark { position: absolute; border-radius: 50%; border: 5px solid #ed1c24; pointer-events: none; }
.mark-red1 { left: 13px; top: 287px; width: 121px; height: 280px; }
.mark-red2 { left: 138px; top: 300px; width: 111px; height: 46px; }
.mark-green1 { left: 1303px; top: 184px; width: 233px; height: 39px; border-color: #22b14c; }
.mark-green2 { left: 1036px; top: 481px; width: 145px; height: 23px; border-color: #22b14c; }

.help-q { font: 700 15px "Liberation Sans", sans-serif; fill: #fff; }
```
